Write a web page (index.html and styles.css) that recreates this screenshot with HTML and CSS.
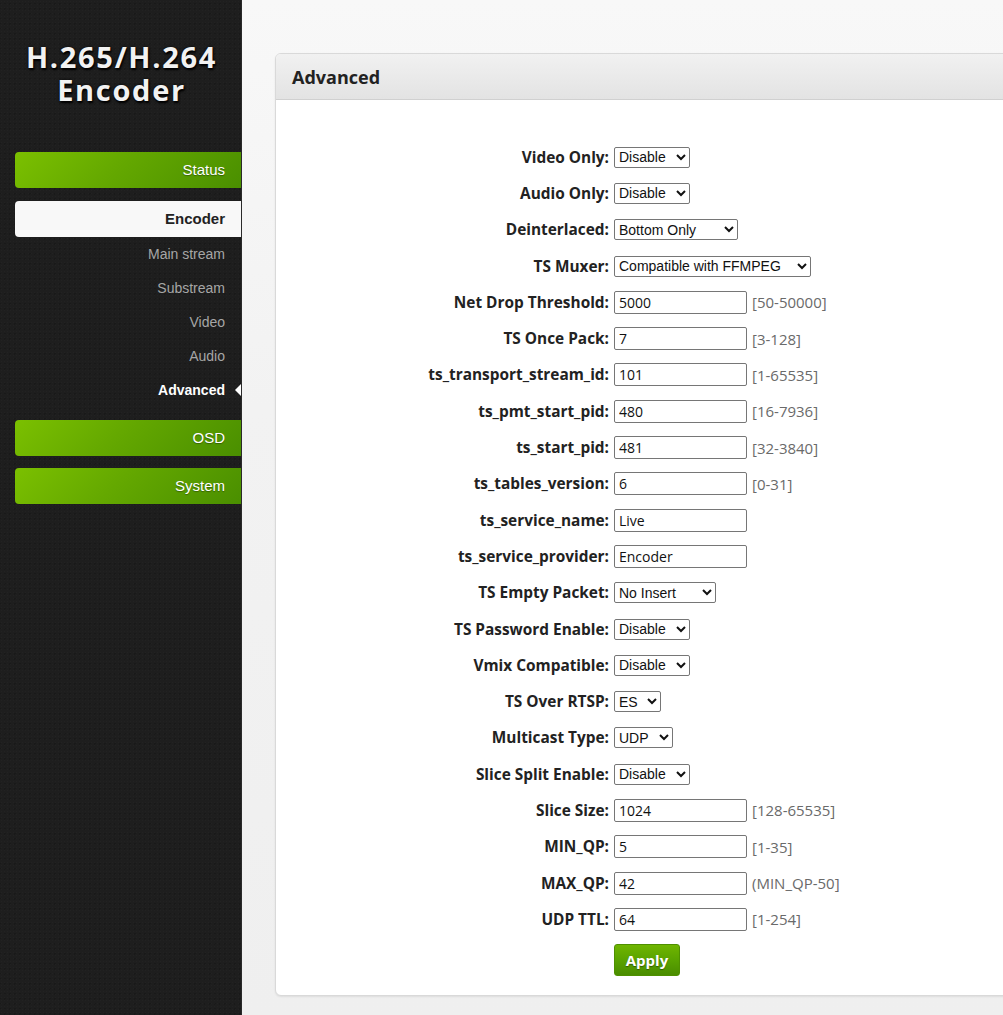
FILE: index.html
```html
<!DOCTYPE html>
<html>
<head>
<meta charset="utf-8">
<title>Advanced</title>
<link rel="stylesheet" href="styles.css">
</head>
<body>
<div class="layout">
  <aside class="sidebar">
    <div class="logo">H.265/H.264<br>Encoder</div>
    <nav class="nav">
      <a class="nav-btn green">Status</a>
      <a class="nav-btn white">Encoder</a>
      <div class="sub">
        <a class="sub-item">Main stream</a>
        <a class="sub-item">Substream</a>
        <a class="sub-item">Video</a>
        <a class="sub-item">Audio</a>
        <a class="sub-item active">Advanced</a>
      </div>
      <a class="nav-btn green osd">OSD</a>
      <a class="nav-btn green">System</a>
    </nav>
  </aside>
  <main class="main">
    <section class="panel">
      <header class="panel-head">Advanced</header>
      <div class="panel-body">
        <div class="form">
          <label class="lbl">Video Only:</label>
          <div class="ctl"><select class="w-dis"><option>Disable</option><option>Enable</option></select></div>

          <label class="lbl">Audio Only:</label>
          <div class="ctl"><select class="w-dis"><option>Disable</option><option>Enable</option></select></div>

          <label class="lbl">Deinterlaced:</label>
          <div class="ctl"><select class="w-deint"><option>Bottom Only</option><option>Top Only</option><option>Disable</option></select></div>

          <label class="lbl">TS Muxer:</label>
          <div class="ctl"><select class="w-mux"><option>Compatible with FFMPEG</option><option>Standard</option></select></div>

          <label class="lbl">Net Drop Threshold:</label>
          <div class="ctl"><input type="text" value="5000"><span class="hint">[50-50000]</span></div>

          <label class="lbl">TS Once Pack:</label>
          <div class="ctl"><input type="text" value="7"><span class="hint">[3-128]</span></div>

          <label class="lbl">ts_transport_stream_id:</label>
          <div class="ctl"><input type="text" value="101"><span class="hint">[1-65535]</span></div>

          <label class="lbl">ts_pmt_start_pid:</label>
          <div class="ctl"><input type="text" value="480"><span class="hint">[16-7936]</span></div>

          <label class="lbl">ts_start_pid:</label>
          <div class="ctl"><input type="text" value="481"><span class="hint">[32-3840]</span></div>

          <label class="lbl">ts_tables_version:</label>
          <div class="ctl"><input type="text" value="6"><span class="hint">[0-31]</span></div>

          <label class="lbl">ts_service_name:</label>
          <div class="ctl"><input type="text" value="Live"></div>

          <label class="lbl">ts_service_provider:</label>
          <div class="ctl"><input type="text" value="Encoder"></div>

          <label class="lbl">TS Empty Packet:</label>
          <div class="ctl"><select class="w-ins"><option>No Insert</option><option>Insert</option></select></div>

          <label class="lbl">TS Password Enable:</label>
          <div class="ctl"><select class="w-dis"><option>Disable</option><option>Enable</option></select></div>

          <label class="lbl">Vmix Compatible:</label>
          <div class="ctl"><select class="w-dis"><option>Disable</option><option>Enable</option></select></div>

          <label class="lbl">TS Over RTSP:</label>
          <div class="ctl"><select class="w-es"><option>ES</option><option>TS</option></select></div>

          <label class="lbl">Multicast Type:</label>
          <div class="ctl"><select class="w-udp"><option>UDP</option><option>RTP</option></select></div>

          <label class="lbl">Slice Split Enable:</label>
          <div class="ctl"><select class="w-dis"><option>Disable</option><option>Enable</option></select></div>

          <label class="lbl">Slice Size:</label>
          <div class="ctl"><input type="text" value="1024"><span class="hint">[128-65535]</span></div>

          <label class="lbl">MIN_QP:</label>
          <div class="ctl"><input type="text" value="5"><span class="hint">[1-35]</span></div>

          <label class="lbl">MAX_QP:</label>
          <div class="ctl"><input type="text" value="42"><span class="hint">(MIN_QP-50]</span></div>

          <label class="lbl">UDP TTL:</label>
          <div class="ctl"><input type="text" value="64"><span class="hint">[1-254]</span></div>

          <div class="apply-cell"><button class="apply">Apply</button></div>
        </div>
      </div>
    </section>
  </main>
</div>
</body>
</html>
```

FILE: styles.css
```css
* { box-sizing: border-box; }

html, body {
  margin: 0;
  padding: 0;
  height: 100%;
}

body {
  font-family: "Open Sans", "Liberation Sans", sans-serif;
  overflow: hidden;
  background: #f0f0f0;
}

.layout {
  display: flex;
  min-height: 1015px;
}

/* ---------- Sidebar ---------- */
.sidebar {
  width: 242px;
  flex: 0 0 242px;
  background-color: #1e1e1e;
  background-image:
    radial-gradient(rgba(255,255,255,0.018) 1px, transparent 1px),
    radial-gradient(rgba(0,0,0,0.18) 1px, transparent 1px);
  background-size: 3px 3px, 5px 5px;
  background-position: 0 0, 2px 1px;
  border-right: 1px solid #2a2a2a;
}

.logo {
  padding-top: 40px;
  padding-left: 2px;
  height: 152px;
  text-align: center;
  font-family: "Open Sans", sans-serif;
  font-weight: 700;
  font-size: 29px;
  letter-spacing: 1.7px;
  line-height: 33px;
  color: #f2f2f2;
  text-shadow: 1px 2px 2px #000, 0 0 3px rgba(0,0,0,0.8);
}

.nav {
  display: flex;
  flex-direction: column;
  padding-left: 15px;
}

.nav-btn {
  display: block;
  height: 36px;
  line-height: 36px;
  text-align: right;
  padding-right: 16px;
  font-family: "Liberation Sans", Arial, sans-serif;
  font-size: 15px;
  border-radius: 4px 0 0 4px;
  cursor: pointer;
}

.nav-btn.green {
  color: #fff;
  background: linear-gradient(135deg, #7bc000 0%, #64a800 45%, #4a8f00 100%);
  text-shadow: 0 1px 1px rgba(0,0,0,0.35);
  margin-bottom: 12px;
}

.nav-btn.white {
  color: #222;
  font-weight: 700;
  background: #f8f8f8;
  margin-bottom: 0;
  margin-top: 1px;
}

.nav-btn.osd {
  margin-top: 13px;
}

.sub {
  display: flex;
  flex-direction: column;
}

.sub-item {
  position: relative;
  display: block;
  height: 34px;
  line-height: 34px;
  text-align: right;
  padding-right: 16px;
  font-family: "Liberation Sans", Arial, sans-serif;
  font-size: 14px;
  color: #a6a6a6;
}

.sub-item.active {
  color: #fff;
  font-weight: 700;
}

.sub-item.active::after {
  content: "";
  position: absolute;
  right: 0;
  top: 11px;
  width: 0;
  height: 0;
  border-top: 6px solid transparent;
  border-bottom: 6px solid transparent;
  border-right: 6px solid #fff;
}

/* ---------- Main ---------- */
.main {
  flex: 1;
  min-width: 0;
  overflow: hidden;
  padding: 53px 0 0 33px;
  background: linear-gradient(180deg, #f8f8f8 0%, #f2f2f2 40%, #efefef 100%);
}

.panel {
  width: 800px;
  background: #fff;
  border: 1px solid #d9d9d9;
  border-radius: 6px;
  box-shadow: 0 1px 2px rgba(0,0,0,0.08);
  overflow: hidden;
}

.panel-head {
  height: 46px;
  line-height: 46px;
  padding-left: 16px;
  font-family: "Open Sans", sans-serif;
  font-size: 18px;
  font-weight: 700;
  color: #222;
  background: linear-gradient(180deg, #f1f1f1 0%, #e3e3e3 100%);
  border-bottom: 1px solid #d0d0d0;
}

.panel-body {
  padding: 39px 0 21px 0;
}

.form {
  display: grid;
  grid-template-columns: 333px auto;
  grid-auto-rows: 36.3px;
  column-gap: 5px;
  align-items: center;
}

.lbl {
  text-align: right;
  font-family: "Open Sans", sans-serif;
  font-weight: 700;
  font-size: 15.4px;
  color: #222;
  white-space: nowrap;
}

.ctl {
  display: flex;
  align-items: center;
  gap: 5px;
}

.ctl input {
  width: 133px;
  height: 23px;
  border: 1px solid #767676;
  border-radius: 2px;
  padding: 1px 4px;
  font-family: "Open Sans", sans-serif;
  font-size: 14px;
  color: #111;
  background: #fff;
}

.ctl select {
  height: 21px;
  font-family: "Liberation Sans", Arial, sans-serif;
  font-size: 14px;
  color: #111;
  border: 1px solid #767676;
  border-radius: 2px;
  background: #fff;
}

.ctl select.w-dis { width: 76px; }
.ctl select.w-deint { width: 124px; }
.ctl select.w-mux { width: 197px; }
.ctl select.w-ins { width: 102px; }
.ctl select.w-es { width: 47px; }
.ctl select.w-udp { width: 59px; }

.hint {
  font-family: "Open Sans", sans-serif;
  font-size: 15px;
  color: #6a6a6a;
}

.apply-cell {
  grid-column: 2;
  padding-top: 6px;
  align-self: start;
}

.apply {
  width: 66px;
  height: 32px;
  border: 1px solid #4f9000;
  border-radius: 3px;
  background: linear-gradient(180deg, #6fb500 0%, #5aa300 50%, #4a8d00 100%);
  color: #fff;
  font-family: "Open Sans", sans-serif;
  font-weight: 700;
  font-size: 15px;
  text-shadow: 0 1px 1px rgba(0,0,0,0.4);
  cursor: pointer;
  padding: 0;
}
```
